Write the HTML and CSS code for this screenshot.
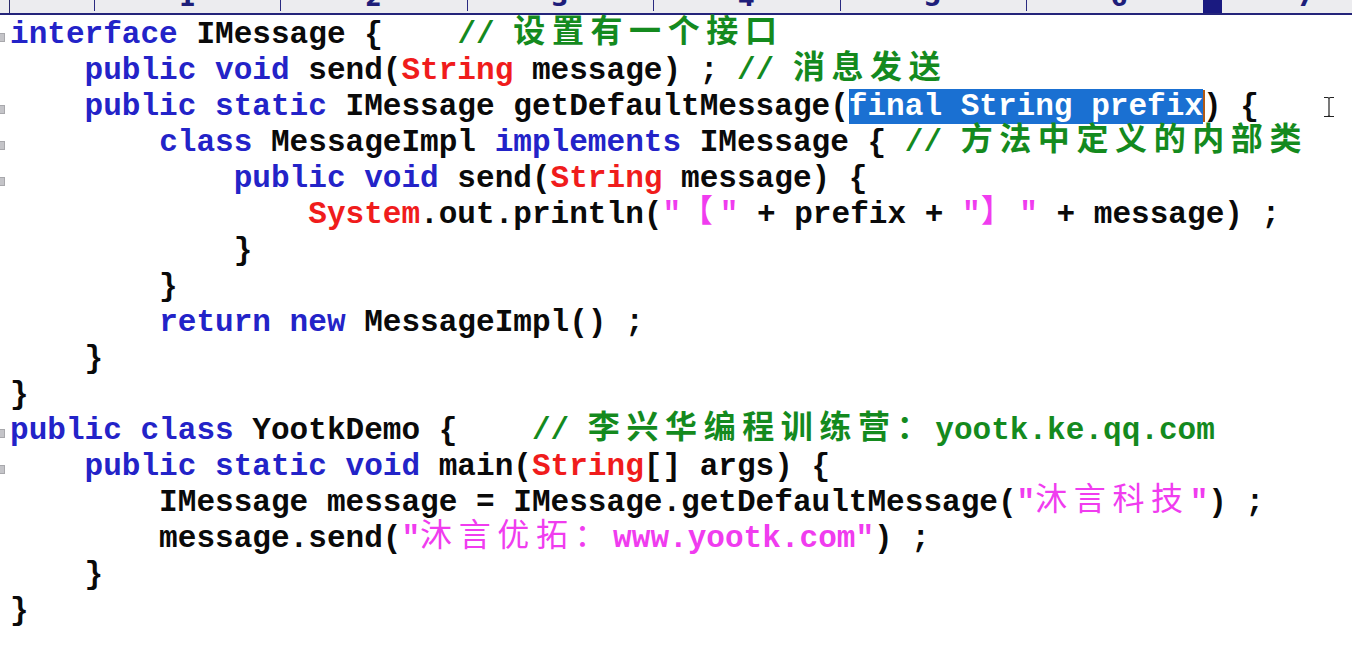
FILE: index.html
```html
<!DOCTYPE html>
<html>
<head>
<meta charset="utf-8">
<link rel="stylesheet" href="styles.css">
</head>
<body>
<div class="ruler">
  <div class="rstart"></div>
  <div class="rcell"><span class="tick"></span><span class="num">1</span></div>
  <div class="rcell"><span class="tick"></span><span class="num">2</span></div>
  <div class="rcell"><span class="tick"></span><span class="num">3</span></div>
  <div class="rcell"><span class="tick"></span><span class="num">4</span></div>
  <div class="rcell"><span class="tick"></span><span class="num">5</span></div>
  <div class="rcell"><span class="tick"></span><span class="num">6</span></div>
  <div class="rcell"><span class="tick"></span><span class="num">7</span></div>
  <div class="rcursor"></div>
</div>
<div class="code">
<div class="ln"><span class="g f"></span><span class="k">interface</span> IMessage {    <span class="c">// <span class="cj b">设置有一个接口</span></span></div>
<div class="ln"><span class="g"></span>    <span class="k">public</span> <span class="k">void</span> send(<span class="t">String</span> message) ; <span class="c">// <span class="cj b">消息发送</span></span></div>
<div class="ln"><span class="g f"></span>    <span class="k">public</span> <span class="k">static</span> IMessage getDefaultMessage(<span class="sel">final String prefix</span><span class="caret"></span>) {<svg class="ibeam" width="12" height="22" viewBox="0 0 12 22"><path d="M1 1.5h3.5M7.5 1.5H11M6 2.5v17M1 20.5h3.5M7.5 20.5H11M4.5 1.5Q6 1.5 6 3M7.5 1.5Q6 1.5 6 3M4.5 20.5Q6 20.5 6 19M7.5 20.5Q6 20.5 6 19" stroke="#222" stroke-width="1.2" fill="none"/></svg></div>
<div class="ln"><span class="g f"></span>        <span class="k">class</span> MessageImpl <span class="k">implements</span> IMessage { <span class="c">// <span class="cj b">方法中定义的内部类</span></span></div>
<div class="ln"><span class="g f"></span>            <span class="k">public</span> <span class="k">void</span> send(<span class="t">String</span> message) {</div>
<div class="ln"><span class="g"></span>                <span class="t">System</span>.out.println(<span class="s">"<span class="cj">【</span>"</span> + prefix + <span class="s">"<span class="cj">】</span>"</span> + message) ;</div>
<div class="ln"><span class="g"></span>            }</div>
<div class="ln"><span class="g"></span>        }</div>
<div class="ln"><span class="g"></span>        <span class="k">return</span> <span class="k">new</span> MessageImpl() ;</div>
<div class="ln"><span class="g"></span>    }</div>
<div class="ln"><span class="g"></span>}</div>
<div class="ln"><span class="g f"></span><span class="k">public</span> <span class="k">class</span> YootkDemo {    <span class="c">// <span class="cj b">李兴华编程训练营：</span>yootk.ke.qq.com</span></div>
<div class="ln"><span class="g f"></span>    <span class="k">public</span> <span class="k">static</span> <span class="k">void</span> main(<span class="t">String</span>[] args) {</div>
<div class="ln"><span class="g"></span>        IMessage message = IMessage.getDefaultMessage(<span class="s">"<span class="cj">沐言科技</span>"</span>) ;</div>
<div class="ln"><span class="g"></span>        message.send(<span class="s">"<span class="cj">沐言优拓：</span>www.yootk.com"</span>) ;</div>
<div class="ln"><span class="g"></span>    }</div>
<div class="ln"><span class="g"></span>}</div>
</div>
</body>
</html>
```
FILE: styles.css
```css
html, body {
  margin: 0;
  padding: 0;
  background: #ffffff;
}
body {
  width: 1352px;
  height: 660px;
  overflow: hidden;
}
.ruler {
  position: relative;
  display: flex;
  height: 13px;
  background: #ececef;
  border-bottom: 2px solid #24247a;
  overflow: hidden;
}
.rstart {
  width: 9px;
  flex: none;
  border-right: 1px solid #2a2a6a;
}
.rcell {
  width: 186.4px;
  flex: none;
  display: flex;
  align-items: flex-start;
}
.tick {
  width: 1px;
  height: 11px;
  margin-left: 84px;
  background: #2a2a80;
}
.num {
  margin-left: auto;
  width: 18.64px;
  text-align: center;
  font-family: "DejaVu Sans", sans-serif;
  font-weight: bold;
  font-size: 24px;
  line-height: 24px;
  margin-top: -14px;
  color: #1e1e7a;
}
.rcursor {
  position: absolute;
  left: 1203px;
  top: 0;
  width: 19px;
  height: 13px;
  background: #1a1a80;
}
.code {
  padding-top: 2px;
  font-family: "Liberation Mono", "Courier New", monospace;
  font-weight: bold;
  font-size: 31.07px;
  color: #0a0a0a;
}
.ln {
  position: relative;
  height: 36px;
  line-height: 36px;
  white-space: pre;
}
.g {
  display: inline-block;
  width: 10px;
  height: 10px;
  position: relative;
}
.g.f::before {
  content: "";
  position: absolute;
  left: 0;
  top: 0;
  width: 4px;
  height: 7px;
  background: #c4c4c8;
  border: 1px solid #a8a8ac;
  border-left: none;
}
.k { color: #2323c8; }
.t { color: #f01c1c; }
.c { color: #148a1e; }
.s { color: #f03cef; }
.cj {
  font-family: "Noto Sans CJK SC", sans-serif;
  font-weight: normal;
  font-size: 32px;
  line-height: 16px;
  letter-spacing: 6.6px;
  vertical-align: 1px;
}
.cj.b { font-weight: bold; }
.sel {
  background: #1a70d2;
  color: #ffffff;
}
.caret {
  display: inline-block;
  width: 0;
  height: 32px;
  vertical-align: -7px;
  border-left: 2px solid #b25a14;
  margin-right: -2px;
}
.ibeam {
  position: absolute;
  left: 1323px;
  top: 7px;
}
```
